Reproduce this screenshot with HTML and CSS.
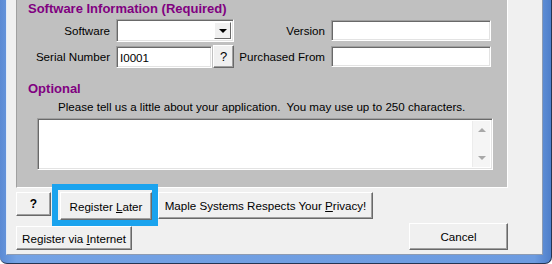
FILE: index.html
```html
<!DOCTYPE html>
<html lang="en">
<head>
    <meta charset="UTF-8">
    <meta name="viewport" content="width=device-width, initial-scale=1.0">
    <title>Registration</title>
    <link rel="stylesheet" href="styles.css">
</head>
<body>
    <div id="wrap">
        <div id="client">
            <div class="panel">
                <h2 class="groupTitle">Software Information (Required)</h2>
                <div class="formGrid">
                    <span class="lbl">Software</span>
                    <div class="combo">
                        <span class="comboBtn"><span class="tri"></span></span>
                    </div>
                    <span class="lbl">Version</span>
                    <div class="field"></div>

                    <span class="lbl">Serial Number</span>
                    <div class="serial">
                        <div class="field">I0001</div>
                        <div class="btn qbtn">?</div>
                    </div>
                    <span class="lbl">Purchased From</span>
                    <div class="field"></div>
                </div>

                <h2 class="groupTitle optional">Optional</h2>
                <p class="hint">Please tell us a little about your application.&nbsp; You may use up to 250 characters.</p>
                <div class="memo">
                    <div class="memoText"></div>
                    <div class="scroll">
                        <span class="arrow up"></span>
                        <span class="arrow down"></span>
                    </div>
                </div>
            </div>

            <div class="actions">
                <div class="btn help">?</div>
                <div class="mark">
                    <div class="btn later"><span>Register <u>L</u>ater</span></div>
                </div>
                <div class="btn privacy"><span>Maple Systems Respects Your <u>P</u>rivacy!</span></div>
            </div>
            <div class="actions last">
                <div class="btn internet"><span>Register via <u>I</u>nternet</span></div>
                <div class="btn cancel">Cancel</div>
            </div>
        </div>
    </div>
</body>
</html>
```

FILE: styles.css
```css
* {
    margin: 0;
    padding: 0;
    box-sizing: border-box;
}
body {
    width: 552px;
    height: 264px;
    overflow: hidden;
    background: #fff;
    font-family: "Liberation Sans", Arial, sans-serif;
    font-size: 11.6px;
    color: #000;
}

#wrap {
    width: 552px;
    height: 264px;
    background: linear-gradient(90deg, #5b8ad4, #74a2e4 3%, #6c9be0 97%, #4f7fca);
    padding: 0 8px 8px 6px;
    border-right: 1px solid #253552;
    border-bottom: 1px solid #253552;
    border-radius: 0 0 7px 7px;
}

#client {
    height: 100%;
    background: #f0f0f0;
    border-left: 1px solid #e2ebf8;
    border-right: 1px solid #8d9bb2;
    border-bottom: 1px solid #8d9bb2;
    padding-left: 9px;
}

.panel {
    width: 492px;
    height: 188px;
    background: #c0c0c0;
    border-left: 1px solid #a0a0a0;
    border-right: 1px solid #fff;
    border-bottom: 1px solid #fff;
}

.groupTitle {
    margin-left: 11px;
    padding-top: 1px;
    font-size: 13px;
    line-height: 16px;
    font-weight: bold;
    color: #800080;
}

.formGrid {
    margin-top: 2px;
    display: grid;
    grid-template-columns: 99px 118px 97px 160px;
    grid-auto-rows: 23px;
    row-gap: 3px;
}

.lbl {
    align-self: center;
    text-align: right;
    padding-right: 6px;
    white-space: nowrap;
}

.field {
    background: #fff;
    border: 1px solid;
    border-color: #a0a0a0 #fff #fff #a0a0a0;
    box-shadow: inset 1px 1px 0 #696969, inset -1px -1px 0 #e3e3e3;
    height: 21px;
    align-self: center;
    padding: 4px 0 0 3px;
    line-height: 13px;
}

.combo {
    background: #fff;
    border: 1px solid;
    border-color: #a0a0a0 #fff #fff #a0a0a0;
    box-shadow: inset 1px 1px 0 #696969, inset -1px -1px 0 #e3e3e3;
    padding: 2px;
    display: flex;
    justify-content: flex-end;
}
.comboBtn {
    width: 17px;
    height: 100%;
    background: #f0f0f0;
    border: 1px solid;
    border-color: #fff #696969 #696969 #fff;
    display: flex;
    align-items: center;
    justify-content: center;
}
.tri {
    width: 0;
    height: 0;
    border-left: 4px solid transparent;
    border-right: 4px solid transparent;
    border-top: 4px solid #000;
    margin-top: 1px;
}

.serial {
    display: flex;
    gap: 1px;
}
.serial .field {
    width: 97px;
    height: 22px;
}

.btn {
    background: #f0f0f0;
    border: 1px solid;
    border-color: #fff #696969 #696969 #fff;
    box-shadow: inset -1px -1px 0 #a0a0a0;
    display: flex;
    align-items: center;
    justify-content: center;
    white-space: nowrap;
}
.qbtn {
    width: 21px;
    height: 23px;
    font-size: 13px;
}

.optional {
    margin-top: 12px;
}

.hint {
    margin: 3px 0 0 41px;
    line-height: 14px;
}

.memo {
    margin: 4px 0 0 20px;
    width: 456px;
    height: 52px;
    background: #fff;
    border: 1px solid;
    border-color: #a0a0a0 #fff #fff #a0a0a0;
    box-shadow: inset 1px 1px 0 #696969, inset -1px -1px 0 #e3e3e3;
    display: flex;
    padding: 2px;
}
.memoText {
    flex: 1;
}
.scroll {
    width: 18px;
    background: #f5f5f5;
    border-left: 1px solid #ececec;
    display: flex;
    flex-direction: column;
    justify-content: space-between;
    align-items: center;
    padding: 7px 0;
}
.arrow {
    width: 0;
    height: 0;
    border-left: 4px solid transparent;
    border-right: 4px solid transparent;
}
.arrow.up {
    border-bottom: 4px solid #a8a8a8;
}
.arrow.down {
    border-top: 4px solid #a8a8a8;
}

.actions {
    display: flex;
    align-items: flex-start;
    margin-top: 4px;
}
.help {
    width: 35px;
    height: 24px;
    font-weight: bold;
    font-size: 12px;
}
.mark {
    position: relative;
    margin-left: 9px;
}
.mark::after {
    content: "";
    position: absolute;
    left: -8px;
    top: -8px;
    right: -6px;
    bottom: -6px;
    border: 6px solid #1aa3ee;
}
.later {
    width: 92px;
    height: 28px;
}
.privacy {
    margin-left: 6px;
    width: 215px;
    height: 27px;
}

.last {
    margin-top: 3px;
    justify-content: space-between;
    align-items: flex-end;
    width: 492px;
}
.internet {
    width: 116px;
    height: 24px;
}
.cancel {
    width: 99px;
    height: 27px;
}
```
